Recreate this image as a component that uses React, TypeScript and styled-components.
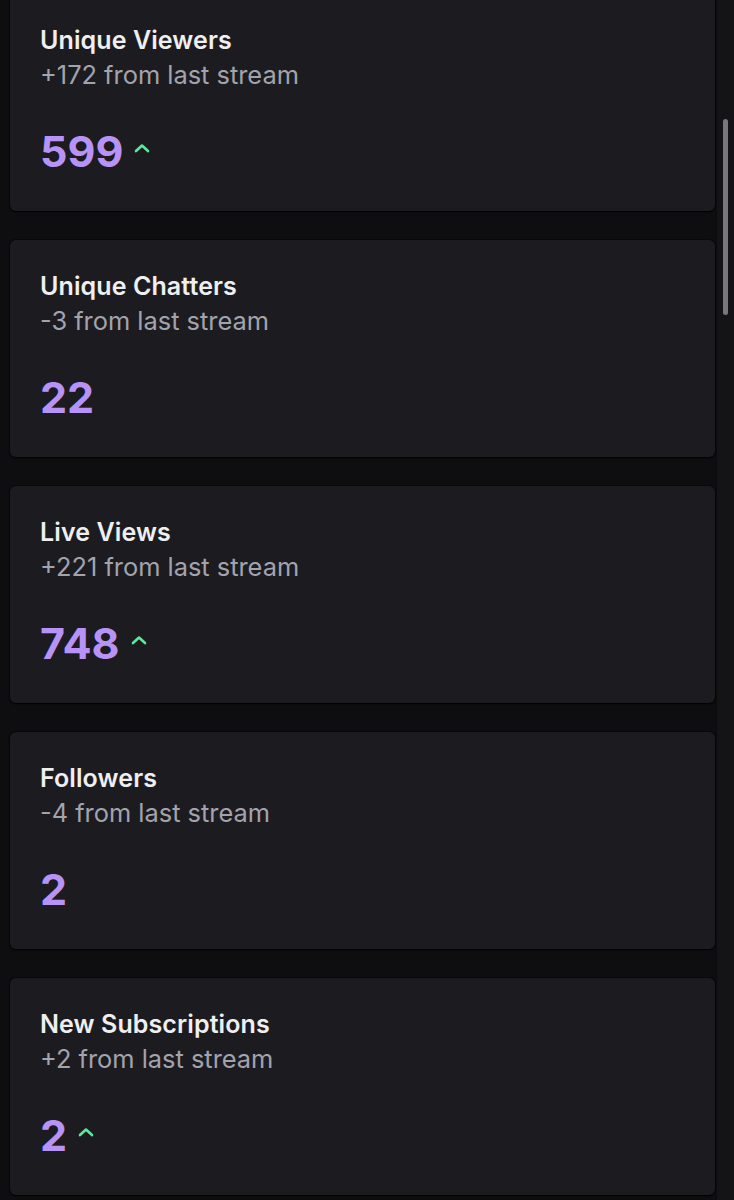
import React from "react";
import styled, { createGlobalStyle } from "styled-components";

const Global = createGlobalStyle`
  html, body { margin: 0; padding: 0; background: #0e0e10; }
  body { font-family: Inter, "Noto Sans", sans-serif; -webkit-font-smoothing: antialiased; }
  #root { width: 734px; height: 1200px; overflow: hidden; }
`;

const Page = styled.div`
  display: flex;
  width: 734px;
  height: 1200px;
  background: #0e0e10;
  overflow: hidden;
`;

const List = styled.div`
  flex: 1;
  display: flex;
  flex-direction: column;
  gap: 29px;
  padding: 0 1px 0 10px;
  margin-top: -6px;
`;

const Card = styled.section`
  height: 217px;
  box-sizing: border-box;
  background: #1c1c20;
  border-radius: 6px;
  box-shadow: 0 1px 2px rgba(0, 0, 0, 0.8), 0 0 0 1px rgba(0, 0, 0, 0.35);
  padding: 30px 30px 0 30px;
  display: flex;
  flex-direction: column;
`;

const Title = styled.h3`
  margin: 0;
  font-size: 25px;
  font-weight: 600;
  line-height: 32px;
  letter-spacing: 0.1px;
  color: #efeff1;
`;

const Sub = styled.p`
  margin: 3px 0 0;
  font-size: 25.4px;
  font-weight: 400;
  line-height: 32px;
  color: #a3a3ad;
`;

const ValueRow = styled.div`
  display: flex;
  align-items: center;
  gap: 10px;
  margin-top: 33px;
  height: 54px;
`;

const Value = styled.span`
  font-size: 43px;
  font-weight: 700;
  line-height: 54px;
  color: #b893f7;
`;

const Up = styled.svg`
  width: 18px;
  height: 12px;
  margin-top: -6px;
`;

const Track = styled.div`
  width: 18px;
  background: #141417;
  display: flex;
  justify-content: center;
  box-shadow: inset 1px 0 0 #0b0b0d;
`;

const Thumb = styled.div`
  width: 5px;
  height: 196px;
  margin-top: 119px;
  border-radius: 3px;
  background: #77777d;
`;

const data = [
  { title: "Unique Viewers", sub: "+172 from last stream", value: "599", up: true },
  { title: "Unique Chatters", sub: "-3 from last stream", value: "22", up: false },
  { title: "Live Views", sub: "+221 from last stream", value: "748", up: true },
  { title: "Followers", sub: "-4 from last stream", value: "2", up: false },
  { title: "New Subscriptions", sub: "+2 from last stream", value: "2", up: true },
];

export default function App() {
  return (
    <>
      <Global />
      <Page>
        <List>
          {data.map((d) => (
            <Card key={d.title}>
              <Title>{d.title}</Title>
              <Sub>{d.sub}</Sub>
              <ValueRow>
                <Value>{d.value}</Value>
                {d.up && (
                  <Up viewBox="0 0 18 12">
                    <path d="M3 9 L9 3.5 L15 9" fill="none" stroke="#5ee89f" strokeWidth="2.6" strokeLinecap="round" strokeLinejoin="round" />
                  </Up>
                )}
              </ValueRow>
            </Card>
          ))}
        </List>
        <Track>
          <Thumb />
        </Track>
      </Page>
    </>
  );
}
